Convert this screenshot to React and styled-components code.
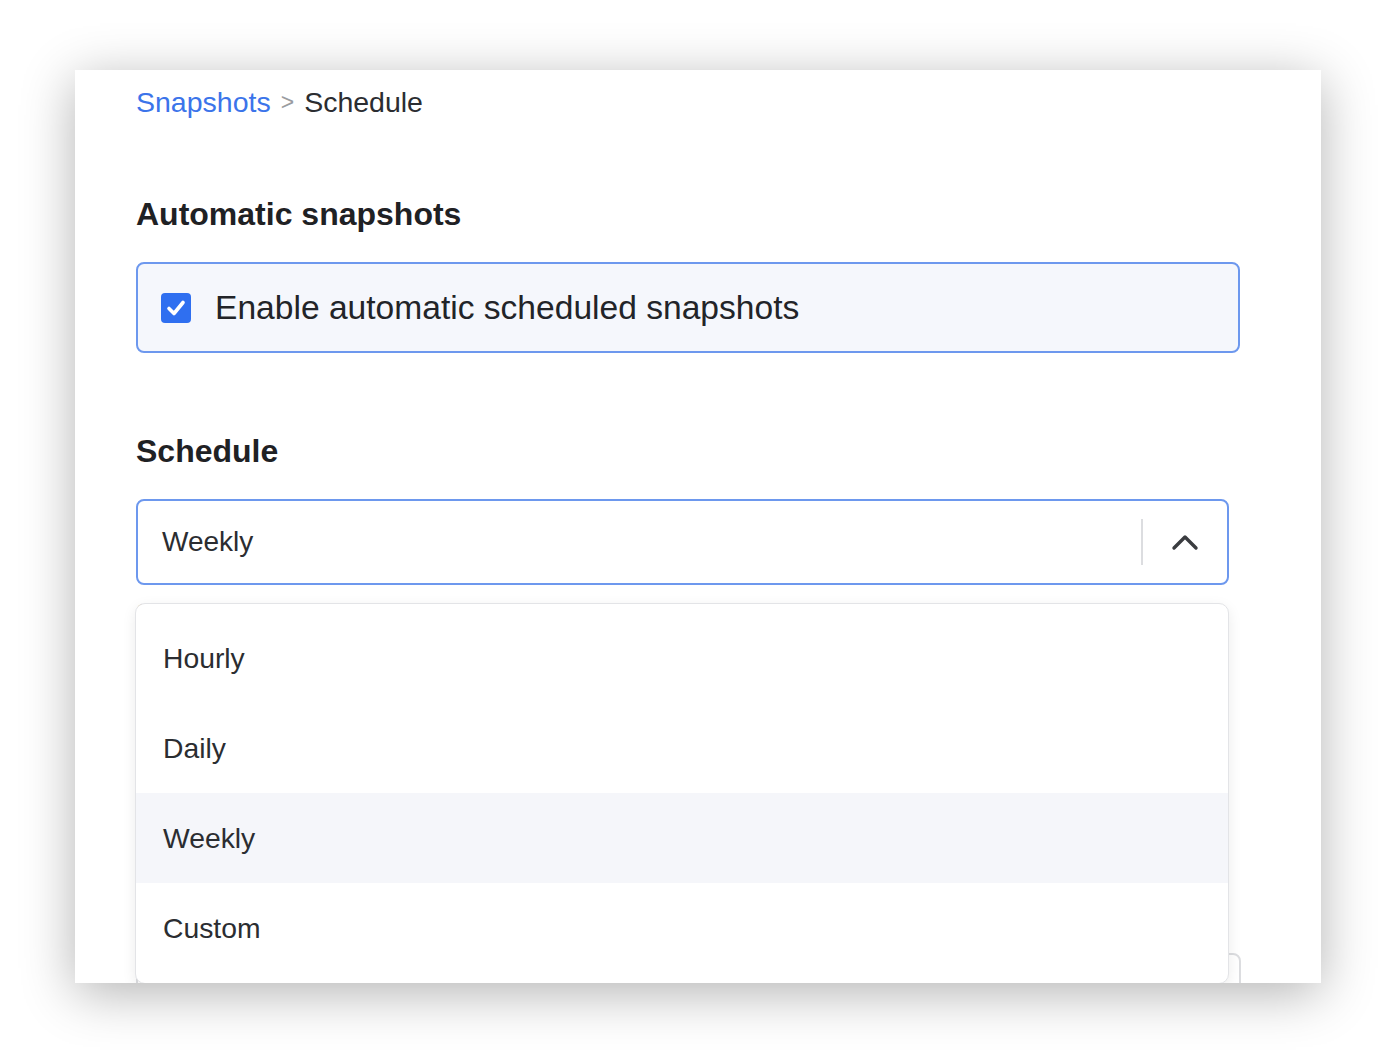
import React from 'react';
import styled, { createGlobalStyle } from 'styled-components';

const GlobalStyle = createGlobalStyle`
    html, body {
        margin: 0;
        padding: 0;
        background: #ffffff;
    }
    body {
        font-family: "Liberation Sans", Arial, sans-serif;
        color: #222428;
    }
`

const Stage = styled.div`
    width: 1396px;
    height: 1050px;
    padding: 70px 0 0 75px;
    box-sizing: border-box;
`

const Window = styled.div`
    width: 1246px;
    height: 913px;
    background: #ffffff;
    box-shadow: 0 10px 50px rgba(0, 0, 0, 0.3);
    overflow: hidden;
    padding: 16px 81px 0 61px;
    box-sizing: border-box;
`

const Crumbs = styled.div`
    font-size: 28.5px;
    line-height: 32px;
    display: flex;
    align-items: center;
    gap: 10px;
    color: #2b2d31;
`

const CrumbLink = styled.a`
    color: #3b74ea;
    text-decoration: none;
`

const CrumbSep = styled.span`
    color: #9a9ca0;
    font-size: 23px;
`

const SectionTitle = styled.h2`
    margin: ${p => p.$top}px 0 0;
    font-size: 32px;
    line-height: 36px;
    font-weight: 700;
    color: #1f2124;
`

const OptionBox = styled.label`
    margin-top: 30px;
    height: 91px;
    box-sizing: border-box;
    border: 2px solid #6d98ee;
    border-radius: 8px;
    background: #f5f7fc;
    display: flex;
    align-items: center;
    padding-left: 23px;
    gap: 24px;
    font-size: 33.6px;
    color: #222428;
`

const Check = styled.span`
    width: 30px;
    height: 30px;
    border-radius: 4px;
    background: #2f6ff0;
    display: flex;
    align-items: center;
    justify-content: center;
`

const SelectWrap = styled.div`
    position: relative;
    margin-top: 30px;
    width: 1093px;
`

const SelectBox = styled.div`
    height: 86px;
    box-sizing: border-box;
    border: 2px solid #6d98ee;
    border-radius: 8px;
    background: #ffffff;
    display: flex;
    align-items: center;
    padding-left: 24px;
    font-size: 28px;
    color: #2b2d31;
`

const SelectValue = styled.div`
    flex: 1;
`

const Divider = styled.div`
    width: 2px;
    height: 46px;
    background: #dcdde0;
`

const Toggle = styled.div`
    width: 84px;
    display: flex;
    align-items: center;
    justify-content: center;
`

const Helper = styled.div`
    margin-top: 14px;
    font-size: 24px;
    color: #6b6e73;
`

const NextBox = styled.div`
    margin-top: 326px;
    height: 90px;
    width: 1105px;
    border: 2px solid #dcdde0;
    border-radius: 8px;
    box-sizing: border-box;
`

const Menu = styled.div`
    position: absolute;
    top: 104px;
    left: -1px;
    width: 1094px;
    background: #ffffff;
    border: 1px solid #e3e4e7;
    border-radius: 10px;
    box-shadow: 0 4px 14px rgba(0, 0, 0, 0.08);
    padding: 9px 0 10px;
    box-sizing: border-box;
`

const MenuItem = styled.div`
    height: 90px;
    display: flex;
    align-items: center;
    padding-left: 27px;
    font-size: 28.3px;
    color: #2b2d31;
    background: ${p => (p.$active ? '#f5f6fa' : 'transparent')};
`

const options = ['Hourly', 'Daily', 'Weekly', 'Custom']

function App() {
    const selected = 'Weekly'

    return (
        <Stage>
            <GlobalStyle />
            <Window>
                <Crumbs>
                    <CrumbLink href="#">Snapshots</CrumbLink>
                    <CrumbSep>&gt;</CrumbSep>
                    <span>Schedule</span>
                </Crumbs>

                <SectionTitle $top={78}>Automatic snapshots</SectionTitle>
                <OptionBox>
                    <Check>
                        <svg width="22" height="22" viewBox="0 0 22 22" fill="none">
                            <polyline points="4,11.5 9,16.5 18,5.5" stroke="#fff" strokeWidth="3.6" strokeLinecap="round" strokeLinejoin="round" />
                        </svg>
                    </Check>
                    Enable automatic scheduled snapshots
                </OptionBox>

                <SectionTitle $top={80}>Schedule</SectionTitle>
                <SelectWrap>
                    <SelectBox>
                        <SelectValue>{selected}</SelectValue>
                        <Divider />
                        <Toggle>
                            <svg width="28" height="18" viewBox="0 0 28 18" fill="none">
                                <polyline points="3,15 14,4 25,15" stroke="#3a3c40" strokeWidth="3.4" strokeLinecap="round" strokeLinejoin="round" />
                            </svg>
                        </Toggle>
                    </SelectBox>
                    <Helper>Snapshots are taken once a week at the selected time</Helper>
                    <NextBox />
                    <Menu>
                        {options.map(o => (
                            <MenuItem key={o} $active={o === selected}>{o}</MenuItem>
                        ))}
                    </Menu>
                </SelectWrap>
            </Window>
        </Stage>
    )
}

export default App
